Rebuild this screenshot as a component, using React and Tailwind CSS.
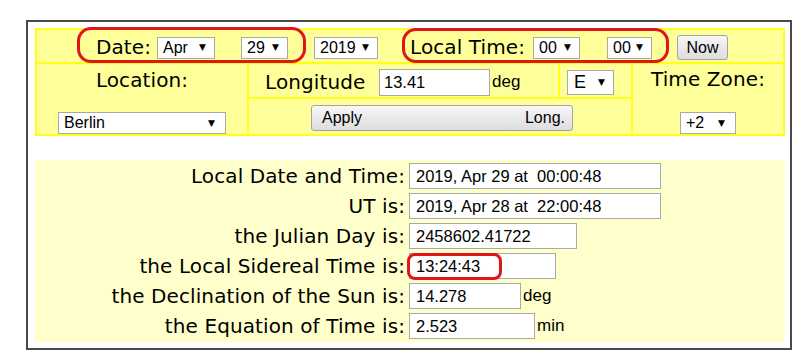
import React from "react";

const LBL = "font-['DejaVu_Sans',Verdana,sans-serif] text-[20px] tracking-[0.1px] text-black whitespace-nowrap leading-[23px]";
const SANS = "font-['Liberation_Sans',Arial,sans-serif] text-black";

function Sel({ className = "", children, textCls = "text-[16px]" }) {
  return (
    <div className={`flex items-center justify-between bg-white border border-[#a9a9a9] pl-[5px] pr-[8px] ${SANS} ${className}`}>
      <span className={`${textCls} leading-none`}>{children}</span>
      <span className="text-[9px] leading-none font-['DejaVu_Sans',sans-serif]">▼</span>
    </div>
  );
}

function Btn({ className = "", children }) {
  return (
    <div className={`flex items-center border border-[#a3a3a3] rounded-[3px] bg-gradient-to-b from-[#f7f7f7] to-[#dddddd] text-[16px] text-[#222] ${SANS} ${className}`}>
      {children}
    </div>
  );
}

function Row({ label, value, w, suffix }) {
  return (
    <div className="flex items-center h-[30px]">
      <div className={`w-[370px] text-right ${LBL}`}>{label}</div>
      <div className={`ml-[4px] h-[26px] border border-[#a9a9a9] bg-white pl-[6px] flex items-center text-[16.5px] whitespace-pre ${SANS} ${w}`}>
        {value}
      </div>
      {suffix && <span className={`ml-[2px] text-[17px] ${SANS}`}>{suffix}</span>}
    </div>
  );
}

export default function App() {
  return (
    <div className="relative w-[807px] h-[359px] overflow-hidden bg-white">
      <div className="ml-[26px] mt-[20px] w-[766px] h-[330px] border-2 border-[#4a4a4a] pl-[7px] pr-[5px] pt-[6px]">
        {/* control table */}
        <div className="w-[750px] grid grid-cols-[210px_309px_71px_150px] grid-rows-[32px_33px_35px] gap-[2px] p-[2px] bg-[#ffff1a]">
          <div className="col-span-4 bg-[#ffff99] flex items-center pl-[59px] pt-[3px]">
            <span className={`w-[61px] ${LBL}`}>Date:</span>
            <Sel className="w-[58px] h-[22px]">Apr</Sel>
            <Sel className="ml-[26px] w-[47px] h-[22px] pl-[4px]">29</Sel>
            <Sel className="ml-[26px] w-[64px] h-[22px] pr-[6px]">2019</Sel>
            <span className={`ml-[32px] w-[123px] ${LBL}`}>Local Time:</span>
            <Sel className="w-[47px] h-[22px] pl-[4px]">00</Sel>
            <Sel className="ml-[27px] w-[45px] h-[22px] pl-[4px]">00</Sel>
            <Btn className="ml-[25px] w-[51px] h-[25px] justify-center">Now</Btn>
          </div>

          <div className="col-start-1 row-start-2 row-span-2 bg-[#ffff99] flex flex-col items-center pt-[5px]">
            <span className={LBL}>Location:</span>
            <Sel className="mt-auto w-[168px] h-[22px] pr-[10px]">Berlin</Sel>
          </div>

          <div className="col-start-2 row-start-2 bg-[#ffff99] flex items-center pl-[16px] pt-[3px]">
            <span className={`w-[114px] ${LBL}`}>Longitude</span>
            <div className={`w-[111px] h-[27px] bg-white border border-[#a9a9a9] flex items-center pl-[4px] text-[16.5px] ${SANS}`}>13.41</div>
            <span className={`ml-[2px] text-[17px] ${SANS}`}>deg</span>
          </div>

          <div className="col-start-3 row-start-2 bg-[#ffff99] flex items-center pl-[7px] pt-[3px]">
            <Sel className="w-[47px] h-[25px] pl-[6px]" textCls="text-[18px]">E</Sel>
          </div>

          <div className="col-start-4 row-start-2 row-span-2 bg-[#ffff99] flex flex-col items-center pt-[4px]">
            <span className={LBL}>Time Zone:</span>
            <Sel className="mt-auto w-[56px] h-[22px] pr-[10px]">+2</Sel>
          </div>

          <div className="col-start-2 col-span-2 row-start-3 bg-[#ffff99] flex items-center pl-[62px] pt-[3px]">
            <Btn className="w-[262px] h-[26px] justify-between pl-[10px] pr-[7px]">
              <span>Apply</span>
              <span>Long.</span>
            </Btn>
          </div>
        </div>

        {/* results */}
        <div className="mt-[24px] w-[750px] h-[182px] bg-[#ffffcc] pt-[1px]">
          <Row label="Local Date and Time:" value="2019, Apr 29 at  00:00:48" w="w-[252px]" />
          <Row label="UT is:" value="2019, Apr 28 at  22:00:48" w="w-[252px]" />
          <Row label="the Julian Day is:" value="2458602.41722" w="w-[168px]" />
          <Row label="the Local Sidereal Time is:" value="13:24:43" w="w-[147px]" />
          <Row label="the Declination of the Sun is:" value="14.278" w="w-[112px]" suffix="deg" />
          <Row label="the Equation of Time is:" value="2.523" w="w-[126px]" suffix="min" />
        </div>
      </div>

      {/* red highlight marks */}
      <div className="absolute left-[77px] top-[27px] w-[229px] h-[36px] border-[3px] border-[#e0141b] rounded-[14px]" />
      <div className="absolute left-[402px] top-[28px] w-[267px] h-[35px] border-[3px] border-[#e0141b] rounded-[14px]" />
      <div className="absolute left-[407px] top-[253px] w-[95px] h-[27px] border-[3px] border-[#e0141b] rounded-[8px]" />
    </div>
  );
}
